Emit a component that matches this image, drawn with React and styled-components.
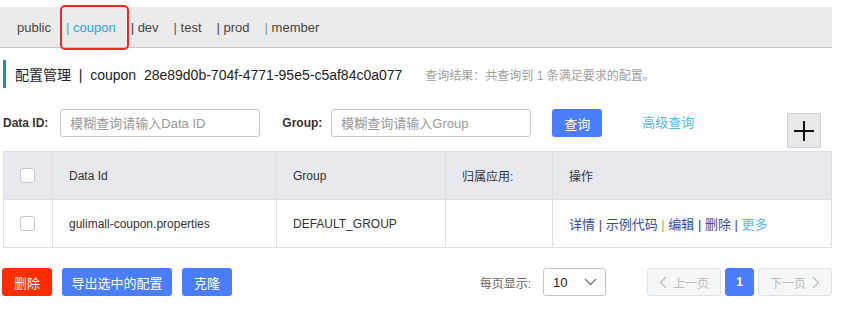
import React from "react";
import styled, { createGlobalStyle } from "styled-components";

const GlobalStyle = createGlobalStyle`
  body {
    margin: 0;
    background: #fff;
    font-family: "Liberation Sans", Arial, "Noto Sans CJK SC", sans-serif;
    color: #333;
  }
`;

const Page = styled.div`
  width: 832px;
  padding-top: 7px;
`;

const TopBar = styled.div`
  height: 40px;
  background: #ebebeb;
  border-bottom: 1px solid #c8c8c8;
  display: flex;
  align-items: center;
  gap: 15px;
  padding-left: 17px;
  font-size: 13px;
  color: #444;
`;

const Tab = styled.span`
  position: relative;
  white-space: pre;
  color: ${(p) => (p.active ? "#2aa5d8" : "#444")};
`;

const Sep = styled.span`
  color: ${(p) => p.color};
`;

const Highlight = styled.span`
  position: absolute;
  left: -6px;
  right: -13px;
  top: -15px;
  bottom: -15px;
  border: 2px solid #ee2a24;
  border-radius: 5px;
`;

const TitleRow = styled.div`
  margin: 12px 0 0 3px;
  height: 28px;
  display: flex;
  align-items: center;
  border-left: 3px solid #1a90c8;
  padding-left: 9px;
`;

const Title = styled.span`
  font-size: 14px;
  color: #222;
  white-space: pre;
`;

const Result = styled.span`
  margin-left: 23px;
  font-size: 12px;
  color: #a0a0a0;
`;

const SearchRow = styled.div`
  margin-top: 21px;
  display: flex;
  align-items: flex-start;
  padding-left: 3px;
`;

const Label = styled.label`
  font-size: 12px;
  font-weight: bold;
  color: #333;
  line-height: 28px;
  margin-right: ${(p) => p.gap}px;
`;

const Input = styled.input`
  box-sizing: border-box;
  width: 200px;
  height: 28px;
  border: 1px solid #c4c6cf;
  border-radius: 3px;
  padding: 0 0 0 9px;
  font-size: 13px;
  font-family: inherit;
  margin-right: ${(p) => p.gap}px;
  &::placeholder {
    color: #999;
  }
`;

const Button = styled.button`
  box-sizing: border-box;
  height: 28px;
  width: ${(p) => p.w}px;
  border: none;
  border-radius: 3px;
  background: ${(p) => (p.danger ? "#ff2d00" : "#4a7dff")};
  color: #fff;
  font-size: 13px;
  font-family: inherit;
  padding: 0;
`;

const LinkText = styled.span`
  font-size: 13px;
  line-height: 27px;
  color: #5ab8e0;
  margin-left: 40px;
`;

const PlusButton = styled.button`
  box-sizing: border-box;
  margin: 4px 11px 0 auto;
  width: 34px;
  height: 35px;
  background: #e8e8e8;
  border: 1px solid #d0d0d0;
  padding: 0;
  display: flex;
  align-items: center;
  justify-content: center;
`;

const Table = styled.div`
  margin: 3px 0 0 3px;
  border: 1px solid #dcdee2;
  font-size: 12px;
  color: #333;
`;

const Row = styled.div`
  display: grid;
  grid-template-columns: 48px 224px 169px 107px 1fr;
  height: 47px;
  background: ${(p) => (p.head ? "#e8e9ee" : "#fff")};
  border-top: ${(p) => (p.head ? "none" : "1px solid #dcdee2")};
`;

const Cell = styled.div`
  display: flex;
  align-items: center;
  padding-left: 16px;
  border-left: ${(p) => (p.first ? "none" : "1px solid #dcdee2")};
  white-space: pre;
`;

const Checkbox = styled.span`
  box-sizing: border-box;
  width: 15px;
  height: 15px;
  border: 1px solid #c4c6cf;
  border-radius: 3px;
  background: #fff;
`;

const Ops = styled.span`
  font-size: 13px;
`;

const Op = styled.span`
  color: ${(p) => p.color};
`;

const Footer = styled.div`
  margin-top: 20px;
  display: flex;
  align-items: center;
  gap: 10px;
  padding-left: 2px;
`;

const PageLabel = styled.span`
  margin-left: auto;
  font-size: 12px;
  color: #666;
  margin-right: 2px;
`;

const Select = styled.div`
  box-sizing: border-box;
  width: 63px;
  height: 28px;
  border: 1px solid #c4c6cf;
  border-radius: 3px;
  display: flex;
  align-items: center;
  justify-content: space-between;
  padding: 0 8px 0 9px;
  font-size: 13px;
  color: #222;
  margin-right: 31px;
`;

const Pager = styled.div`
  display: flex;
  gap: 4px;
`;

const PageBtn = styled.div`
  box-sizing: border-box;
  height: 28px;
  width: ${(p) => p.w}px;
  border-radius: 3px;
  display: flex;
  align-items: center;
  justify-content: center;
  gap: 6px;
  font-size: 12px;
  background: ${(p) => (p.active ? "#4a7dff" : "#f5f6f8")};
  border: 1px solid ${(p) => (p.active ? "#4a7dff" : "#e0e1e5")};
  color: ${(p) => (p.active ? "#fff" : "#bbb")};
  font-weight: ${(p) => (p.active ? "bold" : "normal")};
`;

const Chevron = ({ dir }) => (
  <svg width="8" height="13" viewBox="0 0 8 13">
    <path
      d={dir === "left" ? "M7 1 L1.5 6.5 L7 12" : "M1 1 L6.5 6.5 L1 12"}
      fill="none"
      stroke="#c0c0c0"
      strokeWidth="1.3"
    />
  </svg>
);

const tabs = [
  { name: "public" },
  { name: "coupon", sep: "#3ab0d8", active: true },
  { name: "dev", sep: "#333" },
  { name: "test", sep: "#8a4a3a" },
  { name: "prod", sep: "#5a3aa0" },
  { name: "member", sep: "#7a9ab8" },
];

const ops = [
  ["详情", "#2f4da6"],
  [" | ", "#5b3aa0"],
  ["示例代码", "#2f4da6"],
  [" | ", "#c9a040"],
  ["编辑", "#2f4da6"],
  [" | ", "#444"],
  ["删除", "#2f4da6"],
  [" | ", "#5b3aa0"],
  ["更多", "#5ab8e0"],
];

export default function App() {
  return (
    <Page>
      <GlobalStyle />
      <TopBar>
        {tabs.map((t) => (
          <Tab key={t.name} active={t.active}>
            {t.sep && <Sep color={t.sep}>| </Sep>}
            {t.name}
            {t.active && <Highlight />}
          </Tab>
        ))}
      </TopBar>

      <TitleRow>
        <Title>配置管理  |  coupon  28e89d0b-704f-4771-95e5-c5af84c0a077</Title>
        <Result>查询结果：共查询到 1 条满足要求的配置。</Result>
      </TitleRow>

      <SearchRow>
        <Label gap={12}>Data ID:</Label>
        <Input gap={22} placeholder="模糊查询请输入Data ID" />
        <Label gap={9}>Group:</Label>
        <Input gap={21} placeholder="模糊查询请输入Group" />
        <Button w={50}>查询</Button>
        <LinkText>高级查询</LinkText>
        <PlusButton>
          <svg width="22" height="22" viewBox="0 0 22 22">
            <path d="M11 1 V21 M1 11 H21" stroke="#111" strokeWidth="2" />
          </svg>
        </PlusButton>
      </SearchRow>

      <Table>
        <Row head>
          <Cell first>
            <Checkbox />
          </Cell>
          <Cell>Data Id</Cell>
          <Cell>Group</Cell>
          <Cell>归属应用:</Cell>
          <Cell>操作</Cell>
        </Row>
        <Row>
          <Cell first>
            <Checkbox />
          </Cell>
          <Cell>gulimall-coupon.properties</Cell>
          <Cell>DEFAULT_GROUP</Cell>
          <Cell />
          <Cell>
            <Ops>
              {ops.map(([t, c], i) => (
                <Op key={i} color={c}>
                  {t}
                </Op>
              ))}
            </Ops>
          </Cell>
        </Row>
      </Table>

      <Footer>
        <Button w={50} danger>
          删除
        </Button>
        <Button w={110}>导出选中的配置</Button>
        <Button w={50}>克隆</Button>
        <PageLabel>每页显示:</PageLabel>
        <Select>
          <span>10</span>
          <svg width="13" height="8" viewBox="0 0 13 8">
            <path d="M1 1 L6.5 6.5 L12 1" fill="none" stroke="#777" strokeWidth="1.3" />
          </svg>
        </Select>
        <Pager>
          <PageBtn w={74}>
            <Chevron dir="left" />
            上一页
          </PageBtn>
          <PageBtn w={29} active>
            1
          </PageBtn>
          <PageBtn w={74}>
            下一页
            <Chevron dir="right" />
          </PageBtn>
        </Pager>
      </Footer>
    </Page>
  );
}
